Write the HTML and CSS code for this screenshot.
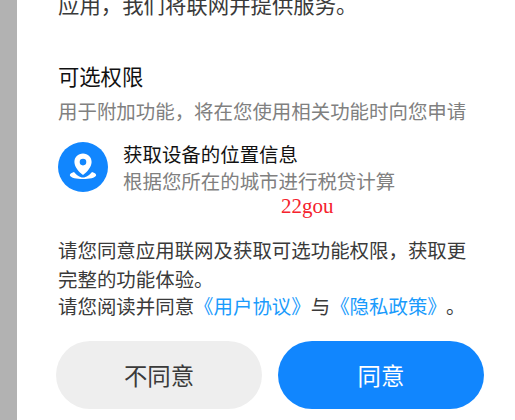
FILE: index.html
```html
<!DOCTYPE html>
<html lang="zh">
<head>
<meta charset="utf-8">
<title>权限</title>
<link rel="stylesheet" href="styles.css">
</head>
<body>
<div class="screen">
  <aside class="strip"></aside>
  <main class="sheet">
    <p class="intro">应用，我们将联网并提供服务。</p>
    <h2 class="title">可选权限</h2>
    <p class="desc">用于附加功能，将在您使用相关功能时向您申请</p>
    <div class="perm">
      <span class="perm-icon">
        <svg viewBox="0 0 50 50" width="50" height="50">
          <circle cx="25" cy="25" r="25" fill="#1186fe"/>
          <path fill="#fff" fill-rule="evenodd" d="M25 11.500c-5 0-8.600 3.700-8.600 8.400 0 5 4.600 10 8.600 13.100 4-3.100 8.600-8.100 8.600-13.100 0-4.700-3.600-8.400-8.600-8.400zM25 16.800a3.300 3.300 0 1 1 0 6.600 3.300 3.300 0 0 1 0-6.600z"/>
          <path fill="#fff" d="M16 30c-2.800.8-4.500 2.100-4.100 3.500.8 2.400 6.800 3.500 13.100 3.500s12.300-1.100 13.100-3.500c.4-1.400-1.300-2.700-4.100-3.500-2.200 2.800-5.700 5.500-9 5.500s-6.800-2.700-9-5.500z"/>
        </svg>
      </span>
      <div class="perm-text">
        <div class="perm-name">获取设备的位置信息</div>
        <div class="perm-sub">根据您所在的城市进行税贷计算</div>
      </div>
    </div>
    <span class="mark">22gou</span>
    <p class="body-text first">请您同意应用联网及获取可选功能权限，获取更完整的功能体验。</p>
    <p class="body-text second">请您阅读并同意<a class="link">《用户协议》</a>与<a class="link">《隐私政策》</a><span class="stop">。</span></p>
    <div class="actions">
      <button class="btn btn-no">不同意</button>
      <button class="btn btn-yes">同意</button>
    </div>
  </main>
</div>
</body>
</html>
```
FILE: styles.css
```css
* { box-sizing: border-box; }
html, body { margin: 0; padding: 0; }
body {
  width: 515px;
  height: 420px;
  overflow: hidden;
  background: #fff;
  font-family: "Noto Sans CJK SC", "Noto Sans", sans-serif;
}
.screen { display: flex; height: 420px; overflow: hidden; }
.strip { width: 17px; flex: none; background: #b2b2b2; }
.sheet {
  position: relative;
  flex: 1;
  padding: 0 31px 0 41px;
  font-size: 19.45px;
}
.intro, .desc, .body-text, .title { margin: 0; }
.intro {
  margin-top: -10px;
  height: 28px;
  font-size: 21.4px;
  line-height: 28px;
  color: #3a3a3a;
  white-space: nowrap;
}
.title {
  margin-top: 43px;
  font-size: 21.3px;
  font-weight: 400;
  line-height: 30px;
  color: #111;
}
.desc {
  margin-top: 6px;
  line-height: 28px;
  color: #808080;
  white-space: nowrap;
}
.perm { display: flex; align-items: center; gap: 15px; margin-top: 15px; }
.perm-icon { display: block; width: 50px; height: 50px; flex: none; }
.perm-icon svg { display: block; }
.perm-name { line-height: 27px; color: #111; white-space: nowrap; }
.perm-sub { line-height: 27px; color: #808080; white-space: nowrap; }
.mark {
  position: absolute;
  left: 264px;
  top: 193px;
  font-family: "Liberation Serif", serif;
  font-size: 21px;
  line-height: 26px;
  color: #f5222d;
}
.body-text { color: #3a3a3a; width: 412px; }
.first { margin-top: 41px; line-height: 29px; }
.second { line-height: 26px; white-space: nowrap; }
.link { color: #1a9bfc; }
.stop { margin-left: 9px; }
.actions { display: flex; gap: 16px; margin: 22px 0 0 -2px; }
.btn {
  width: 206px;
  height: 68px;
  border: 0;
  border-radius: 34px;
  font-family: inherit;
  font-size: 23.4px;
  padding: 0;
}
.btn-no { background: #eeeeee; color: #3a3a3a; }
.btn-yes { background: #1186fe; color: #fff; }
```
